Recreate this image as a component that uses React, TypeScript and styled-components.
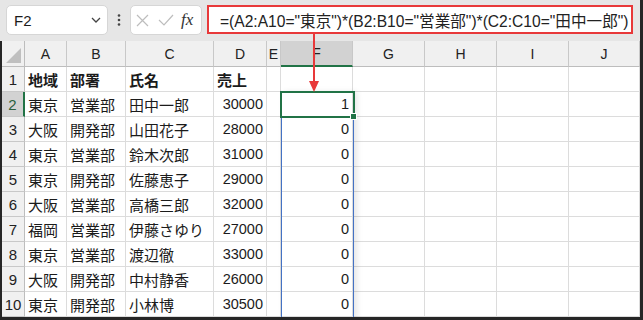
import styled, { createGlobalStyle } from 'styled-components'

const GREEN = '#217346'
const RED = '#e8393a'
const GRID = '#dcdcdc'
const HEAD_LINE = '#c8c8c8'

const COLS = ['A', 'B', 'C', 'D', 'E', 'F', 'G', 'H', 'I', 'J']
const TEMPLATE = '23px 42px 59px 88px 53px 14px 72px 72px 72px 72px 71px'

const rows: [string, string, string, string, number][] = [
  ['東京', '営業部', '田中一郎', '30000', 1],
  ['大阪', '開発部', '山田花子', '28000', 0],
  ['東京', '営業部', '鈴木次郎', '31000', 0],
  ['東京', '開発部', '佐藤恵子', '29000', 0],
  ['大阪', '営業部', '高橋三郎', '32000', 0],
  ['福岡', '営業部', '伊藤さゆり', '27000', 0],
  ['東京', '営業部', '渡辺徹', '33000', 0],
  ['大阪', '開発部', '中村静香', '26000', 0],
  ['東京', '開発部', '小林博', '30500', 0],
]

const GlobalStyle = createGlobalStyle`
  html, body { margin: 0; padding: 0; background: #e6e6e6; }
  * { box-sizing: border-box; }
`

const Frame = styled.div`
  position: relative;
  width: 643px;
  height: 320px;
  overflow: hidden;
  background: #e6e6e6;
  border-right: 3px solid #262626;
  border-bottom: 3px solid #262626;
  font-family: 'Liberation Sans', 'Noto Sans CJK JP', sans-serif;
  color: #1b1b1b;
`

const Toolbar = styled.div`
  display: flex;
  align-items: flex-start;
  height: 41px;
  padding: 5px 0 0 6px;
`

const NameBox = styled.div`
  display: flex;
  align-items: center;
  justify-content: space-between;
  width: 102px;
  height: 30px;
  padding: 0 6px 0 7px;
  background: #fff;
  border: 1px solid #d6d6d6;
  border-radius: 5px;
  font-size: 15px;
`

const Dots = styled.div`
  display: flex;
  align-items: center;
  justify-content: center;
  width: 22px;
  height: 30px;
`

const FxBox = styled.div`
  display: flex;
  align-items: center;
  gap: 9px;
  width: 72px;
  height: 30px;
  padding-left: 5px;
  background: #fff;
  border: 1px solid #d6d6d6;
  border-radius: 5px;
`

const Fx = styled.span`
  font-family: 'Liberation Serif', serif;
  font-style: italic;
  font-size: 17px;
  color: #333;
  margin-left: -2px;
`

const FormulaBox = styled.div`
  display: flex;
  align-items: center;
  margin-left: 5px;
  width: 426px;
  height: 29px;
  padding-left: 11px;
  background: #fff;
  border: 2px solid ${RED};
  font-size: 15.6px;
  white-space: nowrap;
  color: #222;
`

const Sheet = styled.div`
  position: relative;
  display: grid;
  grid-template-columns: ${TEMPLATE};
  grid-template-rows: 26px repeat(10, 25px);
  border-left: 2px solid #262626;
  background: #fff;
  height: 276px;
`

const ColHead = styled.div<{ $active?: boolean }>`
  display: flex;
  align-items: center;
  justify-content: center;
  background: ${(p) => (p.$active ? '#d2d2d2' : '#f0f0f0')};
  border-right: 1px solid ${HEAD_LINE};
  border-bottom: ${(p) => (p.$active ? `2px solid ${GREEN}` : `1px solid #bdbdbd`)};
  font-size: 14px;
  color: #222;
  overflow: hidden;
`

const Corner = styled.div`
  position: relative;
  background: #f0f0f0;
  border-right: 1px solid #bdbdbd;
  border-bottom: 1px solid #bdbdbd;
  &::after {
    content: '';
    position: absolute;
    right: 3px;
    bottom: 3px;
    border-style: solid;
    border-width: 0 0 15px 15px;
    border-color: transparent transparent #bfbfbf transparent;
  }
`

const RowHead = styled.div<{ $active?: boolean }>`
  display: flex;
  align-items: center;
  justify-content: center;
  background: ${(p) => (p.$active ? '#d2d2d2' : '#f0f0f0')};
  border-right: ${(p) => (p.$active ? `2px solid ${GREEN}` : `1px solid #bdbdbd`)};
  border-bottom: 1px solid ${HEAD_LINE};
  font-size: 15px;
  color: ${(p) => (p.$active ? '#2b5f3d' : '#222')};
`

const Cell = styled.div<{ $right?: boolean; $bold?: boolean; $num?: boolean }>`
  display: flex;
  align-items: center;
  justify-content: ${(p) => (p.$right ? 'flex-end' : 'flex-start')};
  padding: 0 3px 0 3px;
  border-right: 1px solid ${GRID};
  border-bottom: 1px solid ${GRID};
  font-size: ${(p) => (p.$num ? '14.5px' : '15px')};
  font-weight: ${(p) => (p.$bold ? 700 : 400)};
  white-space: nowrap;
  overflow: visible;
`

const Spill = styled.div`
  position: absolute;
  left: 279px;
  top: 51px;
  width: 73px;
  height: 226px;
  border: 1px solid #4472c4;
  box-shadow: 3px 0 6px rgba(0, 0, 0, 0.1);
  pointer-events: none;
`

const Selection = styled.div`
  position: absolute;
  left: 278px;
  top: 50px;
  width: 75px;
  height: 27px;
  border: 2px solid ${GREEN};
  pointer-events: none;
  &::after {
    content: '';
    position: absolute;
    right: -4px;
    bottom: -4px;
    width: 5px;
    height: 5px;
    background: ${GREEN};
    border: 1px solid #fff;
  }
`

const Arrow = styled.svg`
  position: absolute;
  left: 308px;
  top: 33px;
`

function Chevron() {
  return (
    <svg width="10" height="6" viewBox="0 0 10 6">
      <path d="M1 1l4 4 4-4" fill="none" stroke="#444" strokeWidth="1.3" />
    </svg>
  )
}

function VDots() {
  return (
    <svg width="4" height="12" viewBox="0 0 4 12">
      <circle cx="2" cy="1.5" r="1.3" fill="#444" />
      <circle cx="2" cy="6" r="1.3" fill="#444" />
      <circle cx="2" cy="10.5" r="1.3" fill="#444" />
    </svg>
  )
}

function Cross() {
  return (
    <svg width="13" height="13" viewBox="0 0 13 13">
      <path d="M1 1l11 11M12 1L1 12" stroke="#bdbdbd" strokeWidth="1.2" />
    </svg>
  )
}

function Check() {
  return (
    <svg width="16" height="12" viewBox="0 0 16 12">
      <path d="M1 6l5 5 9-10" fill="none" stroke="#bdbdbd" strokeWidth="1.2" />
    </svg>
  )
}

export default function App() {
  return (
    <>
      <GlobalStyle />
      <Frame>
        <Toolbar>
          <NameBox>
            <span>F2</span>
            <Chevron />
          </NameBox>
          <Dots>
            <VDots />
          </Dots>
          <FxBox>
            <Cross />
            <Check />
            <Fx>fx</Fx>
          </FxBox>
          <FormulaBox>=(A2:A10="東京")*(B2:B10="営業部")*(C2:C10="田中一郎")</FormulaBox>
        </Toolbar>
        <Sheet>
          <Corner />
          {COLS.map((c) => (
            <ColHead key={c} $active={c === 'F'}>
              {c}
            </ColHead>
          ))}
          <RowHead>1</RowHead>
          <Cell $bold>地域</Cell>
          <Cell $bold>部署</Cell>
          <Cell $bold>氏名</Cell>
          <Cell $bold>売上</Cell>
          {Array.from({ length: 6 }).map((_, i) => (
            <Cell key={i} />
          ))}
          {rows.map((r, i) => (
            <Row key={i} n={i + 2} data={r} />
          ))}
          <Spill />
          <Selection />
        </Sheet>
        <Arrow width="12" height="59" viewBox="0 0 12 59">
          <line x1="6" y1="0" x2="6" y2="49" stroke={RED} strokeWidth="2" />
          <path d="M1 48h10l-5 11z" fill={RED} />
        </Arrow>
      </Frame>
    </>
  )
}

function Row({ n, data }: { n: number; data: [string, string, string, string, number] }) {
  const [area, dept, name, sales, result] = data
  return (
    <>
      <RowHead $active={n === 2}>{n}</RowHead>
      <Cell>{area}</Cell>
      <Cell>{dept}</Cell>
      <Cell>{name}</Cell>
      <Cell $right $num>
        {sales}
      </Cell>
      <Cell />
      <Cell $right $num>
        {result}
      </Cell>
      <Cell />
      <Cell />
      <Cell />
      <Cell />
    </>
  )
}
